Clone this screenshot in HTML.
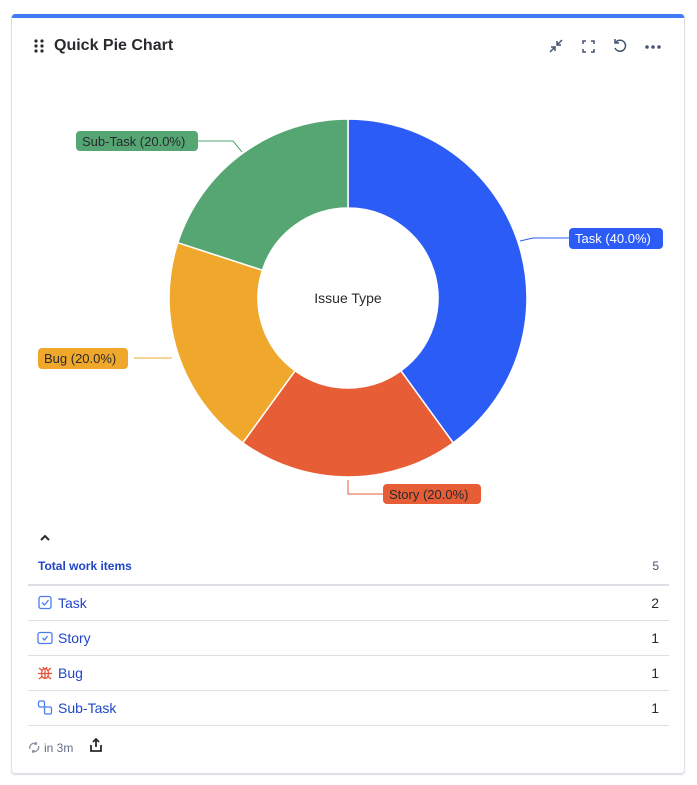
<!DOCTYPE html>
<html><head><style>
body{margin:0;background:#fff;font-family:"Liberation Sans",sans-serif;width:697px;height:785px;position:relative;overflow:hidden}
.card{position:absolute;left:11px;top:14px;width:672px;height:759px;border:1px solid #dcdfe4;border-top:none;border-radius:4px;box-shadow:0 1px 1px rgba(9,30,66,.15)}
.bar{position:absolute;left:11px;top:14px;width:674px;height:4px;background:#3d7bf7;border-radius:4px 4px 0 0}
.title{position:absolute;left:54px;top:37px;font-size:16px;font-weight:bold;color:#292a2e}
.t{position:absolute;font-size:14px;color:#1f45c8}
.n{position:absolute;right:38px;font-size:14px;color:#292a2e}
.line{position:absolute;left:28px;width:641px;height:1px;background:#dcdfe4}
</style></head><body>
<div class="bar"></div>
<div class="card"></div>
<svg style="position:absolute;left:34px;top:39px" width="10" height="14"><g fill="#292a2e"><circle cx="2" cy="2" r="1.6"/><circle cx="8" cy="2" r="1.6"/><circle cx="2" cy="7" r="1.6"/><circle cx="8" cy="7" r="1.6"/><circle cx="2" cy="12" r="1.6"/><circle cx="8" cy="12" r="1.6"/></g></svg>
<div class="title">Quick Pie Chart</div>
<svg style="position:absolute;left:545px;top:36px" width="122" height="20" fill="none" stroke="#44546f" stroke-width="1.5">
<path d="M5 16 L10 11 M6 11 H10 V15 M17 4 L12 9 M12 5 V9 H16"/>
<path d="M38 8 V5 H41 M46 5 H49 V8 M49 13 V16 H46 M41 16 H38 V13"/>
<path d="M71 6 A5.5 5.5 0 1 1 70 12 M70 3 V7 H74"/>
<circle cx="102" cy="11" r="1" fill="#44546f"/><circle cx="108" cy="11" r="1" fill="#44546f"/><circle cx="114" cy="11" r="1" fill="#44546f"/>
</svg>
<svg style="position:absolute;left:0;top:0" width="697" height="520">
<g stroke="#fff" stroke-width="1.5">
<path d="M348 119 A179 179 0 0 1 453.2 442.8 L400.9 370.8 A90 90 0 0 0 348 208 Z" fill="#2c5cf6"/>
<path d="M453.2 442.8 A179 179 0 0 1 242.8 442.8 L295.1 370.8 A90 90 0 0 0 400.9 370.8 Z" fill="#e65d36"/>
<path d="M242.8 442.8 A179 179 0 0 1 177.8 242.7 L262.4 270.2 A90 90 0 0 0 295.1 370.8 Z" fill="#f0a82c"/>
<path d="M177.8 242.7 A179 179 0 0 1 348 119 L348 208 A90 90 0 0 0 262.4 270.2 Z" fill="#55a673"/>
</g>
<text x="348" y="303" text-anchor="middle" font-size="14" fill="#292a2e" font-family="Liberation Sans">Issue Type</text>
<g fill="none" stroke-width="1">
<path d="M520 241 L533 238 H569" stroke="#2c5cf6"/>
<path d="M348 480 V494 H383" stroke="#e65d36"/>
<path d="M134 358 H172" stroke="#f0a82c"/>
<path d="M198 141 H233 L242 152" stroke="#55a673"/>
</g>
<g font-size="13" font-family="Liberation Sans" fill="#fff">
<rect x="569" y="228" width="94" height="21" rx="4" fill="#2c5cf6"/><text x="575" y="243">Task (40.0%)</text>
<rect x="383" y="484" width="98" height="20" rx="4" fill="#e65d36"/><text x="389" y="499" fill="#292a2e">Story (20.0%)</text>
<rect x="38" y="348" width="90" height="21" rx="4" fill="#f0a82c"/><text x="44" y="363" fill="#292a2e">Bug (20.0%)</text>
<rect x="76" y="131" width="122" height="20" rx="4" fill="#55a673"/><text x="82" y="146" fill="#292a2e">Sub-Task (20.0%)</text>
</g>
</svg>
<svg style="position:absolute;left:40px;top:534px" width="10" height="8"><path d="M1 6 L5 2 L9 6" fill="none" stroke="#292a2e" stroke-width="2"/></svg>
<div class="t" style="left:38px;top:559px;font-size:12px;font-weight:bold">Total work items</div>
<div class="n" style="top:559px;font-size:12px;color:#44546f">5</div>
<div class="line" style="top:584px;height:2px"></div>
<svg style="position:absolute;left:38px;top:595px" width="16" height="16" fill="none" stroke="#4a7bf0" stroke-width="1.3"><rect x="1" y="1.5" width="12" height="12" rx="2"/><path d="M4 7.5 L6.5 10 L10.5 5"/></svg>
<div class="t" style="left:58px;top:595px">Task</div><div class="n" style="top:595px">2</div>
<div class="line" style="top:620px"></div>
<svg style="position:absolute;left:37px;top:631px" width="18" height="16" fill="none" stroke="#4a7bf0" stroke-width="1.3"><rect x="1" y="1.5" width="14" height="11" rx="2"/><path d="M5.5 7 L7.5 9 L10.5 5"/></svg>
<div class="t" style="left:58px;top:630px">Story</div><div class="n" style="top:630px">1</div>
<div class="line" style="top:655px"></div>
<svg style="position:absolute;left:37px;top:665px" width="18" height="16" fill="none" stroke="#e5533a" stroke-width="1.3"><ellipse cx="8" cy="8.5" rx="3.5" ry="5"/><path d="M8 4 V13 M1 8.5 H15 M2 3 L5 5.5 M14 3 L11 5.5 M2 14 L5 11.5 M14 14 L11 11.5 M6 2 L7 4 M10 2 L9 4"/></svg>
<div class="t" style="left:58px;top:665px">Bug</div><div class="n" style="top:665px">1</div>
<div class="line" style="top:690px"></div>
<svg style="position:absolute;left:37px;top:700px" width="18" height="16" fill="none" stroke="#4a7bf0" stroke-width="1.3"><rect x="1.5" y="1" width="6" height="6" rx="1.5"/><rect x="7.5" y="7" width="7" height="7" rx="1.5"/></svg>
<div class="t" style="left:58px;top:700px">Sub-Task</div><div class="n" style="top:700px">1</div>
<div class="line" style="top:725px"></div>
<svg style="position:absolute;left:28px;top:741px" width="13" height="13" fill="none" stroke="#8590a2" stroke-width="1.3"><path d="M2 8 A4.5 4.5 0 0 1 8 2.5 M10.5 5 A4.5 4.5 0 0 1 5 10.5 M8 1 L8.5 3 L6.5 3.5 M5 12 L4.5 10 L6.5 9.5"/></svg>
<div style="position:absolute;left:44px;top:741px;font-size:12px;color:#626f86">in 3m</div>
<svg style="position:absolute;left:89px;top:737px" width="14" height="16" fill="none" stroke="#292a2e" stroke-width="1.8"><path d="M7 10 V2 M4 5 L7 2 L10 5 M2 8 V14 H12 V8"/></svg>
</body></html>
